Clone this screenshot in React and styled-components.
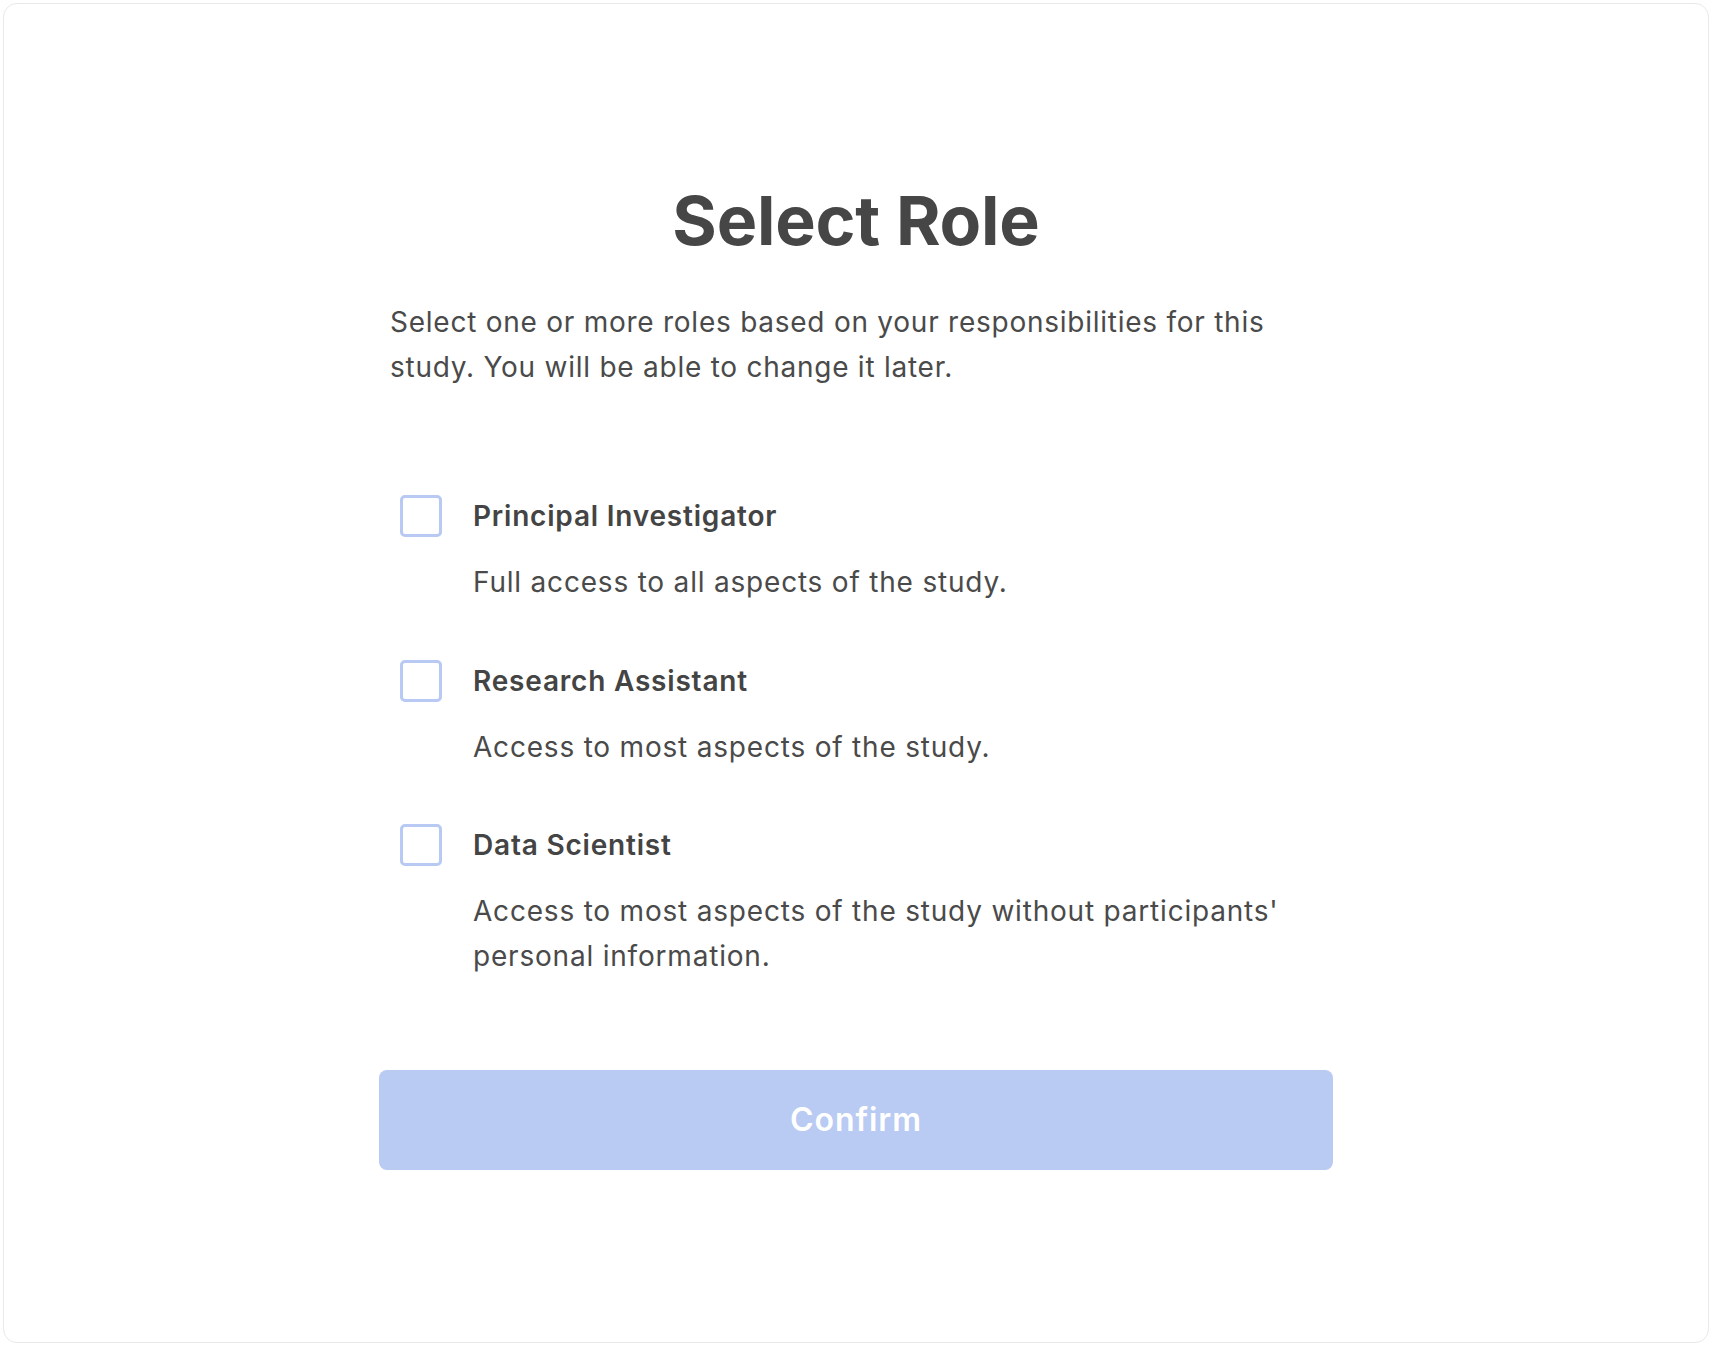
import React, { useState } from "react";
import styled, { createGlobalStyle, css } from "styled-components";

const GlobalStyle = createGlobalStyle`
  * { box-sizing: border-box; }
  html, body { margin: 0; padding: 0; background: #ffffff; }
  body {
    font-family: Inter, "Noto Sans", "Liberation Sans", sans-serif;
    color: #464646;
    -webkit-font-smoothing: antialiased;
  }
`;

const Page = styled.div`
  height: 100vh;
  padding: 3px;
`;

const Card = styled.div`
  height: 100%;
  border: 1px solid #e9e9e9;
  border-radius: 14px;
  background: #ffffff;
  display: flex;
  align-items: center;
  justify-content: center;
`;

const Content = styled.div`
  width: 954px;
  display: flex;
  flex-direction: column;
`;

const Title = styled.h1`
  margin: 0;
  padding-top: 3px;
  font-size: 68px;
  line-height: 82px;
  font-weight: 700;
  text-align: center;
  color: #464646;
  letter-spacing: -0.2px;
`;

const Intro = styled.p`
  margin: 39px 0 0;
  padding: 0 11px;
  font-size: 28px;
  line-height: 44.8px;
  letter-spacing: 0.75px;
  color: #4a4a4a;
`;

const RoleList = styled.div`
  margin-top: 105px;
  padding: 0 21px;
  display: flex;
  flex-direction: column;
  gap: 55px;
`;

const RoleItem = styled.label`
  display: grid;
  grid-template-columns: 42px 1fr;
  column-gap: 31px;
  row-gap: 23px;
  cursor: pointer;
`;

const Box = styled.span`
  width: 42px;
  height: 42px;
  border: 3px solid #b8c9f3;
  border-radius: 5px;
  background: #ffffff;
  display: flex;
  align-items: center;
  justify-content: center;
  ${p => p.checked && css`
    background: #5b7fe8;
    border-color: #5b7fe8;
  `}
`;

const RoleName = styled.span`
  font-size: 28px;
  line-height: 42px;
  font-weight: 600;
  letter-spacing: 0.8px;
  color: #444444;
`;

const RoleDesc = styled.span`
  grid-column: 2;
  font-size: 28px;
  line-height: 44.8px;
  letter-spacing: 0.8px;
  color: #4a4a4a;
`;

const ConfirmButton = styled.button`
  margin-top: 91px;
  height: 100px;
  width: 100%;
  border: none;
  border-radius: 8px;
  background: ${p => (p.disabled ? "#b9caf3" : "#5b7fe8")};
  color: #ffffff;
  font-family: inherit;
  font-size: 32px;
  font-weight: 600;
  letter-spacing: 0.9px;
  cursor: ${p => (p.disabled ? "default" : "pointer")};
`;

const roles = [
  { id: "pi", name: "Principal Investigator", desc: "Full access to all aspects of the study." },
  { id: "ra", name: "Research Assistant", desc: "Access to most aspects of the study." },
  { id: "ds", name: "Data Scientist", desc: "Access to most aspects of the study without participants' personal information." },
];

export default function App() {
  const [selected, setSelected] = useState([]);

  const toggle = id =>
    setSelected(s => (s.includes(id) ? s.filter(x => x !== id) : [...s, id]));

  return (
    <Page>
      <GlobalStyle />
      <Card>
        <Content>
          <Title>Select Role</Title>
          <Intro>
            Select one or more roles based on your responsibilities for this study. You will be able to change it later.
          </Intro>
          <RoleList>
            {roles.map(r => (
              <RoleItem key={r.id} onClick={() => toggle(r.id)}>
                <Box checked={selected.includes(r.id)}>
                  {selected.includes(r.id) && (
                    <svg width="24" height="24" viewBox="0 0 24 24" fill="none" stroke="#fff" strokeWidth="3" strokeLinecap="round" strokeLinejoin="round">
                      <path d="M5 12l5 5 9-10" />
                    </svg>
                  )}
                </Box>
                <RoleName>{r.name}</RoleName>
                <RoleDesc>{r.desc}</RoleDesc>
              </RoleItem>
            ))}
          </RoleList>
          <ConfirmButton disabled={selected.length === 0}>Confirm</ConfirmButton>
        </Content>
      </Card>
    </Page>
  );
}
